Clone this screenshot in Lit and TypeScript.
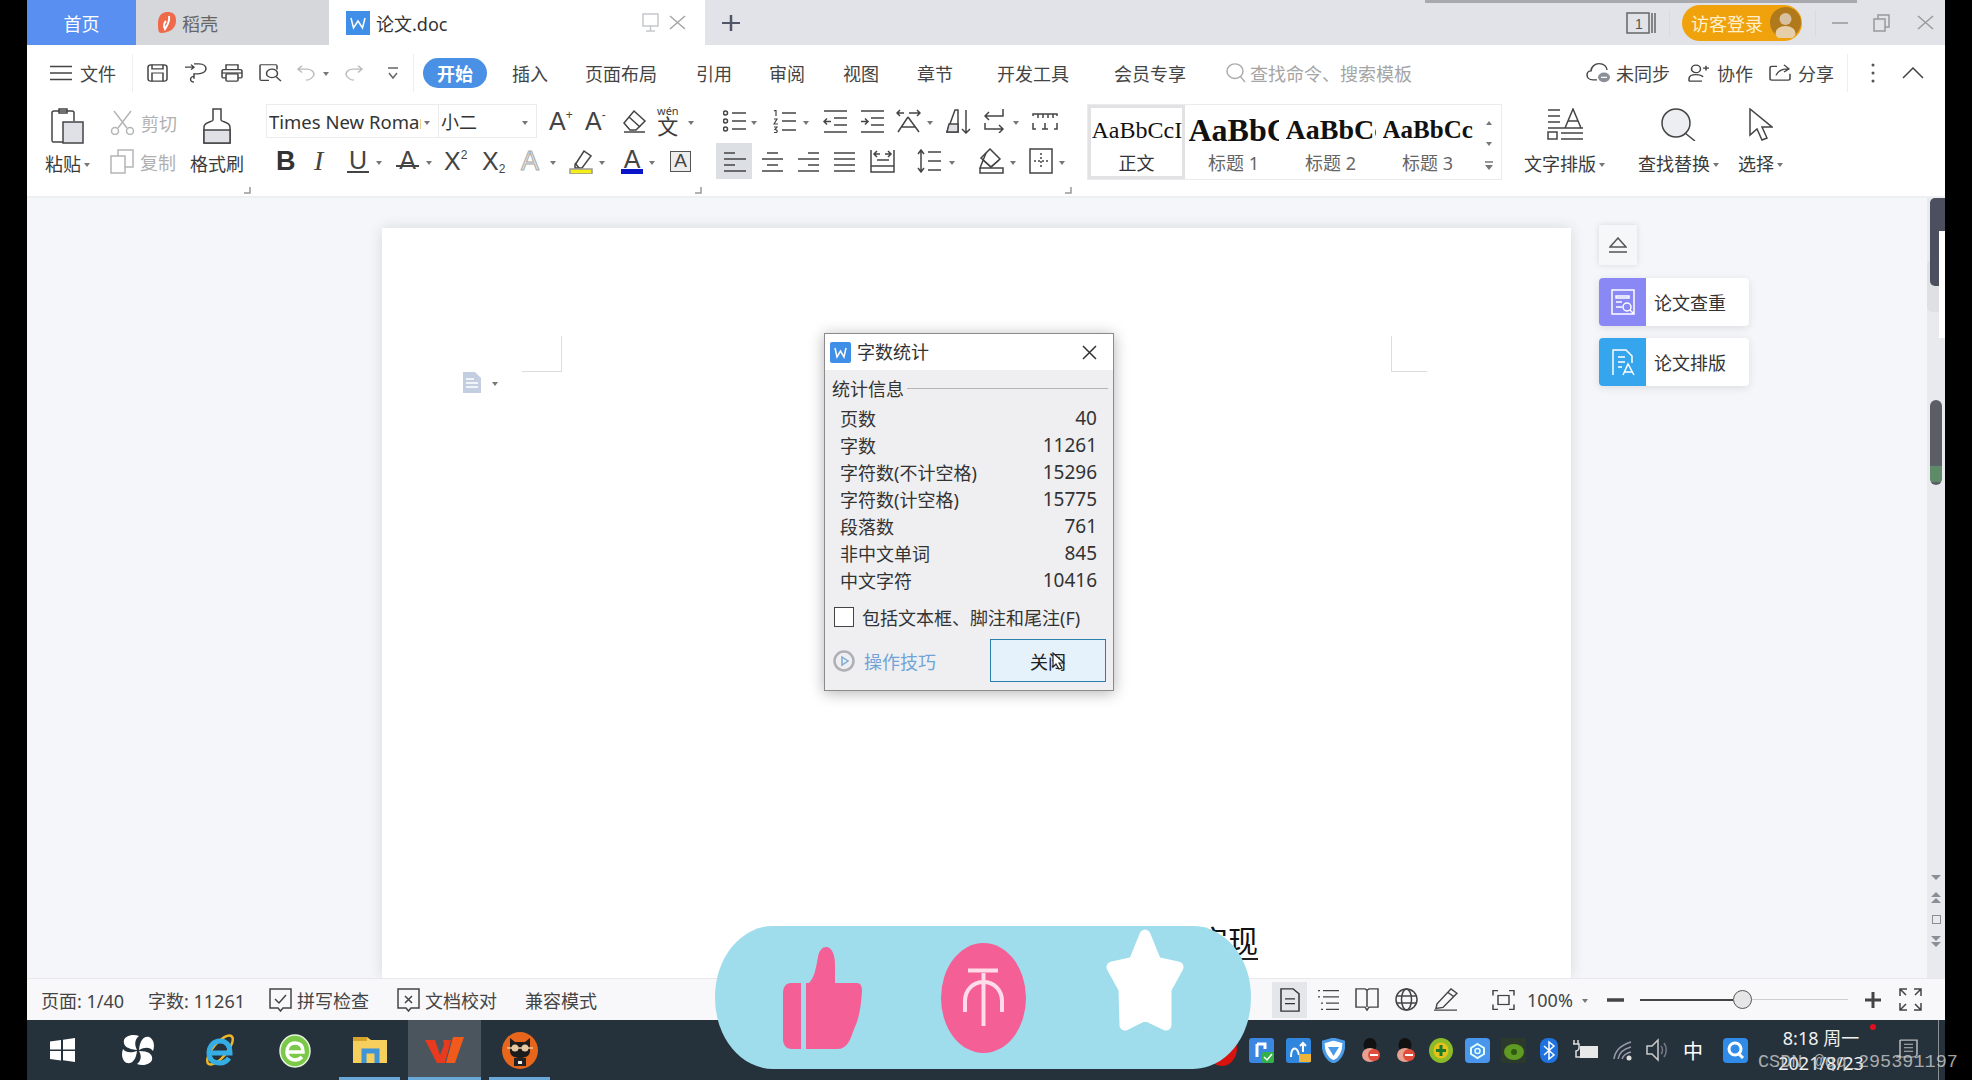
import { LitElement, html, css, svg } from "lit";
import { customElement } from "lit/decorators.js";

// svg wrapper, dh squeezes the drawing to another display height when needed
const ic = (w: number, h: number, body: unknown, color = "#444", dh = h) => html`<svg
  class="ic"
  width=${w}
  height=${dh}
  viewBox="0 0 ${w} ${h}"
  preserveAspectRatio="none"
  fill="none"
  stroke=${color}
  stroke-width="1.5"
>
  ${body}
</svg>`;

const caret = html`<i class="caret"></i>`;
const launcher = ic(7, 7, svg`<path d="M6 0V6H0" stroke="#999" />`);

// places items at given page x positions, each slot runs up to the next item
const spread = (base: number, items: [number, unknown][]) =>
  items.map(([x, tpl], i) => {
    const next = items[i + 1];
    const ml = i === 0 ? x - base : 0;
    const w = next ? `width:${next[0] - x}px;` : "";
    return html`<span class="slot" style="margin-left:${ml}px;${w}">${tpl}</span>`;
  });

const icons = {
  menu: ic(22, 16, svg`<path d="M0 1.5H22M0 8H22M0 14.5H22" />`),
  save: ic(21, 22, svg`<rect x="1" y="1" width="19" height="20" rx="3" /><path d="M5 1V6H16V1M5 21V11H16V21" />`, "#444", 18),
  saveAs: ic(22, 24, svg`<path d="M0 5H9M6 2L9 5L6 8M9 1H14C19 1 21 4 21 7C21 11 17 13 13 13H9V19M9 23A3.5 3.5 0 1 1 9.1 16" />`, "#444", 20),
  print: ic(22, 22, svg`<path d="M5 7V1H17V7M5 17H2C1 17 1 16 1 15V9C1 8 2 7 3 7H19C20 7 21 8 21 9V15C21 16 21 17 20 17H17" /><rect x="5" y="12" width="12" height="9" rx="1" /><path d="M1 11H21" />`, "#444", 18),
  preview: ic(23, 23, svg`<path d="M10 21H2C1 21 1 20 1 19V2C1 1 2 1 2 1H17C18 1 18 2 18 3V7" /><circle cx="13" cy="12" r="5.5" /><path d="M17 16L22 22" />`, "#444", 18),
  undo: ic(18, 20, svg`<path d="M5 2L1 6L5 10M1 6H10C14 6 17 9 17 12C17 15 13 19 9 19" />`, "#bbb", 17),
  redo: ic(18, 20, svg`<path d="M13 2L17 6L13 10M17 6H8C4 6 1 9 1 12C1 15 5 19 9 19" />`, "#bbb", 17),
  custom: ic(12, 14, svg`<path d="M1 2H11M2 7L6 12L10 7" />`, "#666"),
  search: ic(20, 22, svg`<circle cx="9" cy="9" r="8" /><path d="M14.5 15L19 21" />`, "#aaa", 20),
  cloud: ic(25, 26, svg`<path d="M11 22H7C3 22 1 19 1 16C1 13 3 11 5 11C5 6 9 2 13 2C18 2 21 6 21 10" /><circle cx="18" cy="19" r="6" fill="#8b8f98" stroke="none" /><path d="M15 19H21" stroke="#fff" />`, "#444", 21),
  person: ic(21, 22, svg`<circle cx="8" cy="6" r="4.5" /><path d="M1 21V18C1 14 5 13 8 13C11 13 14 14 15 16M1 21H14M15 5H21M18 2V8" />`, "#444", 18),
  share: ic(23, 21, svg`<path d="M8 3H3C2 3 1 4 1 5V18C1 19 2 20 3 20H19C20 20 21 19 21 18V12M7 14C9 8 13 6 19 6M15 1L20 6L15 10" />`, "#444", 17),
  dots: ic(4, 20, svg`<circle cx="2" cy="2" r="1.5" fill="#555" stroke="none" /><circle cx="2" cy="10" r="1.5" fill="#555" stroke="none" /><circle cx="2" cy="18" r="1.5" fill="#555" stroke="none" />`),
  up: ic(22, 12, svg`<path d="M1 11L11 1L21 11" />`),
  paste: ic(33, 36, svg`<path d="M12 34H2C1 34 1 33 1 32V5C1 4 2 3 3 3H21C22 3 23 4 23 5V13" /><rect x="8" y="1" width="8" height="4" /><rect x="12" y="14" width="20" height="21" fill="#dfe1e6" />`),
  cut: ic(25, 25, svg`<path d="M4 1L17 18M21 1L8 18" /><circle cx="5" cy="21" r="3.5" /><circle cx="20" cy="21" r="3.5" />`, "#b5b5b5"),
  copy: ic(24, 25, svg`<rect x="1" y="7" width="14" height="17" /><path d="M8 7V1H23V18H15" />`, "#b5b5b5"),
  brush: ic(28, 36, svg`<path d="M10 1H18V12C18 14 27 14 27 19V35H1V19C1 14 10 14 10 12Z" /><path d="M1 22H27V35H1Z" fill="#dfe1e6" />`),
  erase: ic(25, 24, svg`<path d="M12 2L23 12L14 21H8L2 14Z" /><path d="M7 8L18 18M2 23H23" />`),
  highlight: ic(24, 25, svg`<path d="M6 16L15 2L22 7L13 19H6Z" /><path d="M10 19L6 14" /><rect x="1" y="20" width="22" height="5" fill="#f5ee1b" stroke="#999" />`),
  bullets: ic(23, 22, svg`<circle cx="2.5" cy="3" r="2" /><circle cx="2.5" cy="11" r="2" /><circle cx="2.5" cy="19" r="2" /><path d="M9 3H23M9 11H23M9 19H23" />`),
  numbers: ic(23, 23, svg`<path d="M9 3H23M9 11H23M9 20H23" /><path d="M1 1L3 0V6M1 9H4L1 14H5M1 17H4L2 19.5C4 19.5 5 21 3.5 22.5H1" stroke-width="1.2" />`),
  outdent: ic(24, 23, svg`<path d="M1 1H24M11 8H24M11 15H24M1 22H24M8 11.5H1M4 8.5L1 11.5L4 14.5" />`),
  indent: ic(24, 23, svg`<path d="M1 1H24M11 8H24M11 15H24M1 22H24M1 11.5H8M5 8.5L8 11.5L5 14.5" />`),
  cjk: ic(25, 24, svg`<path d="M1 4H8M4 1L1 4L4 7M13 4H24M21 1L24 4L21 7M12 8L2 23M12 8L23 23M6 18H19" />`),
  sort: ic(25, 25, svg`<path d="M1 23L9 1H12V23H1Z" /><path d="M3 15H12V23H1Z" fill="#dfe1e6" /><path d="M20 1V24M16 20L20 24L24 20" />`),
  wrap: ic(20, 24, svg`<path d="M19 0V7H1M5 3L1 7L5 11M1 14V20H19M15 16L19 20L15 24" />`),
  tabs: ic(26, 20, svg`<path d="M1 5V3H25V5M6 3V7M11 3V7M16 3V7M21 3V7M1 12V18H4M25 12V18H22M13 12V18M10 18H16" />`),
  aLeft: ic(23, 21, svg`<path d="M1 2H12M1 8H23M1 14H12M1 20H23" />`),
  aCenter: ic(23, 21, svg`<path d="M6 2H17M1 8H22M6 14H17M1 20H22" />`),
  aRight: ic(23, 21, svg`<path d="M11 2H22M1 8H22M11 14H22M1 20H22" />`),
  justify: ic(23, 21, svg`<path d="M1 2H22M1 8H22M1 14H22M1 20H22" />`),
  dist: ic(25, 24, svg`<path d="M1 1V23H24V1M1 17H24M7 11H19M4 5H10M7 2L4 5L7 8M15 5H21M18 2L21 5L18 8" />`),
  spacing: ic(24, 24, svg`<path d="M4 1V23M1 5L4 1L7 5M1 19L4 23L7 19M11 3H24M11 12H24M11 21H24" />`),
  fill: ic(25, 26, svg`<path d="M11 1L21 11L12 19L2 10Z" /><path d="M7 5L1 20H24V25H1V20" /><path d="M4 12L12 19L20 12" />`),
  border: ic(24, 26, svg`<rect x="1" y="1" width="22" height="24" /><path d="M12 5V21M5 13H19" stroke-dasharray="2 2" />`),
  layout: ic(36, 32, svg`<path d="M1 2H13M1 8H13M1 14H13M1 20H36M18 20L26 1L34 20M21 13H31M14 31H36M14 25H36" /><rect x="1" y="24" width="9" height="7" />`),
  find: ic(35, 33, svg`<circle cx="15" cy="15" r="14" fill="#eceef2" /><path d="M24 25L34 33" />`),
  select: ic(24, 33, svg`<path d="M1 1V27L8 21L13 32L18 30L13 19H23Z" />`),
  monitor: ic(17, 19, svg`<rect x="1" y="1" width="15" height="12" /><path d="M8.5 13V18M4 18H13" />`, "#c5c8cc"),
  x: ic(18, 18, svg`<path d="M1 1L17 17M17 1L1 17" />`, "#9a9a9a"),
  plus: ic(18, 18, svg`<path d="M9 0V18M0 9H18" stroke-width="2.5" />`, "#505668", 16),
  book: ic(31, 23, svg`<rect x="1" y="2" width="22" height="20" /><path d="M26 2V22M29 2V22" /><text x="9" y="18" font-size="14" fill="#555" stroke="none" font-family="Liberation Sans">1</text>`, "#666"),
  min: ic(16, 2, svg`<path d="M0 1H16" />`, "#999"),
  restore: ic(17, 18, svg`<rect x="1" y="5" width="11" height="12" /><path d="M5 5V1H16V13H12" />`, "#999"),
  wps: ic(24, 24, svg`<rect width="24" height="24" fill="#3f8ee8" stroke="none" /><path d="M5 7L7.5 17L12 10L16.5 17L19 7" stroke="#fff" />`),
  shell: ic(18, 21, svg`<path d="M9 0C15 0 18 2 18 9C18 16 12 21 3 21C0 21 0 17 0 11C0 5 3 0 9 0Z" fill="#ee6a4a" stroke="none" /><path d="M11 4C12 9 9 14 7 17C5 13 7 10 8 9" stroke="#fff" stroke-width="2" />`),
  docCheck: ic(23, 24, svg`<path d="M1 1H22V20H14L11.5 23L9 20H1Z" /><path d="M6 11L10 15L17 7" />`),
  docX: ic(23, 24, svg`<path d="M1 1H22V20H14L11.5 23L9 20H1Z" /><path d="M8 8L15 15M15 8L8 15" />`),
  vDoc: ic(20, 29, svg`<path d="M1 1H13L19 7V28H1Z" /><path d="M5 13H15M5 19H15" />`, "#333", 24),
  vOutline: ic(22, 28, svg`<path d="M6 2H22M1 2H3M6 10H22M1 10H3M9 18H22M4 18H6M9 26H22M4 26H6" />`, "#444", 22),
  vBook: ic(24, 29, svg`<path d="M1 1H10L12 3L14 1H23V24H14L12 28L10 24H1ZM12 3V24" />`, "#444", 23),
  vWeb: ic(23, 23, svg`<circle cx="11.5" cy="11.5" r="10.5" /><ellipse cx="11.5" cy="11.5" rx="5" ry="10.5" /><path d="M1 8H22M1 15H22" />`),
  vPen: ic(24, 26, svg`<path d="M3 18L17 1L23 6L9 22L2 23ZM14 5L20 10M0 25H23" />`, "#444", 23),
  focus: ic(23, 27, svg`<path d="M1 8V2H6M17 2H22V8M1 19V25H6M17 25H22V19" /><rect x="6" y="8" width="11" height="11" />`, "#444", 22),
  full: ic(23, 23, svg`<path d="M1 8V1H8M1 1L7 7M15 1H22V8M22 1L16 7M1 15V22H8M1 22L7 16M15 22H22V15M22 22L16 16" />`),
  eject: ic(18, 16, svg`<path d="M1 10L9 1L17 10Z" /><path d="M0 15H18" />`, "#555"),
  check: ic(24, 26, svg`<rect x="1" y="1" width="22" height="24" /><path d="M5 7H18V9H5ZM5 13H11M5 18H11" /><circle cx="16" cy="18" r="4" /><path d="M19 21L23 25" />`, "#fff"),
  typeset: ic(24, 27, svg`<path d="M2 26V1H15L21 7V14M7 8H14M7 13H14M7 18H11M12 26L17 15L23 26M14 23H21" />`, "#fff"),
  play: ic(22, 22, svg`<circle cx="11" cy="11" r="9.5" stroke-width="2.5" /><path d="M9 7L15 11L9 15Z" stroke="#7ea9d6" />`, "#aeb0b5"),
};

const qq = ic(22, 24, svg`<ellipse cx="10" cy="7" rx="6.5" ry="7" fill="#111" stroke="none" /><ellipse cx="10" cy="17" rx="8" ry="7" fill="#e8a090" stroke="none" /><circle cx="14" cy="17" r="6" fill="#e04b3a" stroke="none" /><path d="M10 17H18" stroke="#fff" stroke-width="2" />`);

const tray = [
  [1249, ic(25, 25, svg`<rect width="25" height="25" rx="3" fill="#3a86e0" stroke="none" /><path d="M8 6V19M8 6H16V11" stroke="#fff" stroke-width="3" /><rect x="13" y="14" width="12" height="11" rx="2" fill="#33b24a" stroke="none" /><path d="M15 19L18 22L23 16" stroke="#fff" />`)],
  [1286, ic(25, 25, svg`<rect width="25" height="25" rx="3" fill="#2f86dc" stroke="none" /><path d="M5 19C5 9 11 7 13 17M17 14V5M14 8L17 5L20 8" stroke="#fff" stroke-width="2" /><rect x="13" y="16" width="12" height="8" fill="#efb53a" stroke="none" />`)],
  [1322, ic(23, 25, svg`<path d="M11.5 1L22 4C22 14 19 21 11.5 24C4 21 1 14 1 4Z" fill="#fff" stroke="#4a9ae8" stroke-width="3" /><path d="M6 9H17L11.5 18Z" fill="#4a9ae8" stroke="none" />`)],
  [1360, qq],
  [1395, qq],
  [1429, ic(24, 25, svg`<ellipse cx="12" cy="12.5" rx="12" ry="12.5" fill="#8cbb2a" stroke="none" /><ellipse cx="12" cy="12.5" rx="7.5" ry="8" fill="#e8c21a" stroke="none" /><path d="M12 7V18M7 12.5H17" stroke="#197a2c" stroke-width="3" />`)],
  [1465, ic(25, 25, svg`<rect width="25" height="25" rx="4" fill="#4a96ec" stroke="none" /><path d="M12.5 6L19 10V16L12.5 20L6 16V10Z" stroke="#dff" stroke-width="2" /><circle cx="12.5" cy="13" r="2.5" stroke="#dff" />`)],
  [1501, ic(25, 25, svg`<rect width="25" height="25" fill="#2b3a2a" stroke="none" /><ellipse cx="13" cy="14" rx="10" ry="8" fill="#5f9a22" stroke="none" /><circle cx="13" cy="14" r="3" fill="#2f5a12" stroke="none" />`)],
  [1540, ic(18, 25, svg`<rect width="18" height="25" rx="8" fill="#1e73e0" stroke="none" /><path d="M4 8L14 17L9 21V4L14 8L4 17" stroke="#fff" />`)],
  [1572, ic(26, 20, svg`<rect x="8" y="6" width="18" height="12" fill="#e8e8e8" stroke="none" /><path d="M2 0V4M6 0V4M1 4H7V8C7 10 5 11 4 11V17H8" stroke="#ddd" />`)],
  [1613, ic(20, 22, svg`<path d="M1 20C2 12 8 6 18 3M5 20C6 14 10 10 18 8M9 20C10 17 13 14 18 13" stroke="#99a" /><circle cx="16" cy="19" r="2.5" fill="#ddd" stroke="none" />`)],
  [1646, ic(21, 24, svg`<path d="M1 8H6L12 2V22L6 16H1Z" stroke="#ccc" /><path d="M15 8C17 10 17 14 15 16M18 5C21 9 21 15 18 19" stroke="#778" />`)],
  [1683, html`<span class="tray-cn">中</span>`],
  [1723, ic(25, 25, svg`<rect width="25" height="25" rx="4" fill="#2f8ae8" stroke="none" /><circle cx="12" cy="11" r="6" stroke="#fff" stroke-width="3" /><path d="M15 15L20 20" stroke="#fff" stroke-width="3" />`)],
  [1775, html`<span class="clock"><span>8:18 周一</span><span>2021/8/23</span></span>`],
  [1895, html`<span class="notify">${ic(23, 30, svg`<path d="M5 3V27H1M5 3H22V23C22 26 20 27 18 27H1C3 27 5 26 5 23M9 9H18M9 14H18M9 19H18" />`, "#bbb", 21)}</span>`],
  [1938, html`<span class="tb-line"></span>`],
] as [number, unknown][];

const apps = [
  [50, ic(25, 24, svg`<path d="M0 3.5L11 2V11.5H0ZM13 1.7L25 0V11.5H13ZM0 13H11V22.5L0 21ZM13 13H25V24L13 22.3Z" fill="#fff" stroke="none" />`)],
  [121, ic(34, 30, svg`<path d="M16 15C5 14 2 10 3 5C5 0 13 -1 18 1C14 4 13 9 16 15ZM18 15C19 5 23 1 28 2C33 4 34 11 32 16C29 12 24 12 18 15ZM18 16C29 16 32 20 31 25C29 30 21 31 16 29C20 26 21 21 18 16ZM16 16C15 25 11 29 6 28C1 26 0 19 2 14C5 18 10 18 16 16Z" fill="#fff" stroke="none" />`)],
  [202, ic(36, 36, svg`<ellipse cx="18" cy="18" rx="18" ry="7" transform="rotate(-50 18 18)" stroke="#efb626" stroke-width="2.5" /><path d="M8 21H28C28 12 23 9 18 9C11 9 7 15 7 21C7 28 12 31 18 31C22 31 25 29 27 26" stroke="#35aee6" stroke-width="5" />`)],
  [279, ic(32, 36, svg`<ellipse cx="16" cy="19" rx="15" ry="16" fill="#7cc94a" stroke="#e8f5e0" stroke-width="1.5" /><path d="M8 20H24C24 13 20 11 16 11C11 11 8 15 8 20C8 25 12 28 16 28C19 28 21 27 23 25" stroke="#fff" stroke-width="3.5" />`)],
  [353, ic(34, 28, svg`<path d="M0 1H14L18 4H34V27H0Z" fill="#f6cf5c" stroke="none" /><rect x="0" y="1" width="14" height="4" fill="#d9a22b" stroke="none" /><path d="M11 27V15H24V27" stroke="#3d94d8" stroke-width="5" />`)],
  [425, ic(39, 26, svg`<path d="M0 3H10L15 18L19 8L18 3H26L20 26H12Z" fill="#e83a1e" stroke="none" /><path d="M28 0H39L30 26H21Z" fill="#f25a1c" stroke="none" />`)],
  [502, ic(36, 37, svg`<ellipse cx="18" cy="18.5" rx="18" ry="18.5" fill="#e8651c" stroke="none" /><path d="M8 6L13 10H23L28 6V19C28 24 23 26 18 26C13 26 8 24 8 19Z" fill="#1c1c1c" stroke="none" /><circle cx="13" cy="16" r="3.5" fill="#e8c8a0" stroke="none" /><circle cx="23" cy="16" r="3.5" fill="#e8c8a0" stroke="none" /><path d="M5 16H31" stroke="#e8c8a0" /><rect x="12" y="26" width="12" height="8" fill="#222" stroke="none" /><rect x="16" y="29" width="4" height="3" fill="#eee" stroke="none" />`)],
] as [number, unknown][];

@customElement("app-root")
export class AppRoot extends LitElement {
  static styles = css`
    :host {
      display: block;
      width: 1972px;
      height: 1080px;
      background: #000;
      overflow: hidden;
      font-family: "Noto Sans", "Noto Sans CJK SC", sans-serif;
      font-size: 18px;
      color: #3a3a3a;
    }
    * {
      box-sizing: border-box;
    }
    .screen {
      position: relative;
      display: flex;
      flex-direction: column;
      width: 1918px;
      height: 1080px;
      margin-left: 27px;
      background: #fff;
    }
    .slot {
      position: relative;
      display: inline-flex;
      flex: none;
      align-items: center;
      white-space: nowrap;
    }
    .ic {
      flex: none;
      display: block;
    }
    .caret {
      flex: none;
      width: 0;
      height: 0;
      margin-top: 3px;
      border: 3.5px solid transparent;
      border-top: 4px solid #777;
      border-bottom: 0;
    }

    /* title bar */
    .titlebar {
      position: relative;
      display: flex;
      flex: none;
      height: 45px;
      background: #e1e3e8;
      align-items: stretch;
    }
    .tab {
      display: flex;
      flex: none;
      align-items: center;
    }
    .tab-home {
      width: 109px;
      justify-content: center;
      background: #5a8ff2;
      color: #fff;
    }
    .tab-shell {
      width: 193px;
      gap: 6px;
      padding-left: 22px;
      background: #d5d7da;
      color: #666;
    }
    .tab-doc {
      width: 376px;
      padding-left: 17px;
      background: #fff;
      color: #333;
    }
    .tab-name {
      width: 266px;
      margin-left: 6px;
    }
    .tab-close {
      margin-left: 10px;
    }
    .title-right {
      display: flex;
      align-items: center;
    }
    .login {
      display: flex;
      width: 120px;
      height: 36px;
      align-items: center;
      justify-content: space-between;
      padding: 0 1px 0 9px;
      border-radius: 18px;
      background: #f0a20c;
      color: #fff0cc;
      font-size: 18px;
    }
    .avatar {
      width: 31px;
      height: 31px;
      border-radius: 50%;
      background: #b07a1c;
    }
    .vline {
      width: 1px;
      height: 26px;
      background: #d8dade;
    }
    .top-shadow {
      position: absolute;
      left: 1398px;
      top: 0;
      width: 432px;
      height: 3px;
      background: #a8a9ad;
    }

    /* menu row */
    .menu {
      display: flex;
      flex: none;
      height: 55px;
      align-items: center;
      color: #444;
    }
    .active {
      display: flex;
      width: 64px;
      height: 30px;
      align-items: center;
      justify-content: center;
      border-radius: 15px;
      background: #4a90e4;
      color: #fff;
      font-weight: 700;
    }
    .grey {
      color: #a5a5a5;
    }
    .menu .vline {
      height: 38px;
      background: #eeeeee;
    }

    /* ribbon */
    .ribbon {
      display: flex;
      flex: none;
      height: 98px;
      border-bottom: 2px solid #eeeff2;
    }
    .group {
      display: flex;
      flex: none;
      flex-direction: column;
    }
    .g-clip {
      width: 235px;
    }
    .g-font {
      width: 448px;
    }
    .g-para {
      width: 370px;
    }
    .g-tools {
      display: flex;
      flex: none;
      align-items: flex-start;
    }
    .g-main {
      display: flex;
      height: 87px;
      align-items: flex-start;
    }
    .foot {
      display: flex;
      justify-content: flex-end;
      padding-right: 11px;
    }
    .g-font .foot,
    .g-para .foot {
      padding-right: 8px;
    }
    .big {
      display: flex;
      flex-direction: column;
      align-items: center;
      padding-top: 8px;
    }
    .big .ic-box {
      display: flex;
      height: 36px;
      align-items: flex-start;
    }
    .label {
      display: flex;
      height: 24px;
      margin-top: 7px;
      align-items: center;
      gap: 3px;
      white-space: nowrap;
    }
    .small-col {
      display: flex;
      flex-direction: column;
      gap: 14px;
      padding-top: 10px;
    }
    .small-col .slot {
      gap: 6px;
      color: #b0b0b0;
      height: 25px;
    }
    .rows {
      display: flex;
      flex-direction: column;
      padding-top: 4px;
    }
    .row1 {
      display: flex;
      height: 34px;
      align-items: center;
    }
    .row2 {
      display: flex;
      height: 36px;
      margin-top: 5px;
      align-items: center;
    }
    .fontbox {
      display: flex;
      height: 34px;
      align-items: center;
      border: 1px solid #ececec;
      padding-left: 2px;
      color: #333;
      font-size: 18px;
    }
    .fontbox.name {
      width: 172px;
      gap: 3px;
      border-right: 0;
    }
    .fontbox.name span {
      width: 152px;
      overflow: hidden;
      font-family: "Noto Sans", sans-serif;
      font-size: 18.5px;
      white-space: nowrap;
    }
    .fontbox.size {
      width: 99px;
      justify-content: space-between;
      padding-right: 8px;
    }
    .glyph {
      line-height: 1;
      font-family: "Liberation Sans", sans-serif;
      font-size: 25px;
      color: #444;
    }
    .glyph sup {
      font-size: 12px;
      vertical-align: 11px;
      line-height: 0;
    }
    .glyph sub {
      font-size: 12px;
      vertical-align: -3px;
      line-height: 0;
    }
    .bold {
      font-weight: 700;
      font-size: 27px;
      color: #333;
    }
    .ital {
      font-family: "Liberation Serif", serif;
      font-style: italic;
      font-size: 28px;
    }
    .under {
      display: inline-block;
      border-bottom: 2px solid #444;
      padding: 0 2px;
      line-height: 22px;
    }
    .strike {
      position: relative;
      display: inline-block;
      width: 23px;
      height: 24px;
      text-align: center;
      overflow: hidden;
      line-height: 22px;
    }
    .strike::after {
      content: "";
      position: absolute;
      left: 0;
      right: 0;
      top: 16px;
      height: 2px;
      background: #444;
    }
    .outline {
      color: #e8e8e8;
      -webkit-text-stroke: 1px #aaa;
      font-size: 27px;
    }
    .colored {
      display: inline-block;
      width: 22px;
      border-bottom: 5px solid #0a14c8;
      line-height: 20px;
      text-align: center;
    }
    .boxed {
      display: block;
      width: 21px;
      height: 21px;
      border: 1.5px solid #555;
      background: #ededed;
      font-size: 19px;
      line-height: 18px;
      text-align: center;
    }
    .wen {
      display: flex;
      flex-direction: column;
      align-items: center;
      line-height: 1;
      font-size: 21px;
    }
    .wen b {
      font-weight: 400;
      font-size: 11px;
      line-height: 10px;
    }
    .on {
      display: flex;
      width: 36px;
      height: 36px;
      margin-left: -7px;
      align-items: center;
      justify-content: center;
      background: #dcdfe4;
    }
    .gallery {
      display: flex;
      flex: none;
      width: 415px;
      height: 76px;
      margin: 4px 0 0 7px;
      border: 1px solid #ebebeb;
    }
    .style {
      display: flex;
      flex: none;
      flex-direction: column;
      width: 97px;
      align-items: center;
      overflow: hidden;
      color: #666;
      padding-top: 6px;
    }
    .style.sel {
      border: 3px solid #e2e2e4;
      padding-top: 3px;
      color: #333;
    }
    .sample {
      display: block;
      width: 90px;
      height: 38px;
      overflow: hidden;
      white-space: nowrap;
      font-family: "Liberation Serif", serif;
      line-height: 38px;
      color: #111;
    }
    .s0 {
      font-size: 24px;
    }
    .s1 {
      font-size: 32px;
      font-weight: 700;
    }
    .s2 {
      font-size: 28px;
      font-weight: 700;
    }
    .s3 {
      font-size: 25px;
      font-weight: 700;
    }
    .spin {
      display: flex;
      flex: 1;
      flex-direction: column;
      align-items: center;
      justify-content: space-around;
      padding: 6px 0 2px;
    }

    /* document area */
    .doc {
      display: flex;
      flex: 1;
      min-height: 0;
      padding-left: 355px;
      background: #f5f6fa;
    }
    .page {
      flex: none;
      width: 1189px;
      margin-top: 30px;
      background: #fff;
      box-shadow: 0 0 14px rgba(0, 0, 0, 0.12);
    }
    .marks {
      display: flex;
      justify-content: space-between;
      margin-top: 108px;
      padding: 0 144px 0 140px;
    }
    .mark {
      width: 40px;
      height: 36px;
      border-right: 1px solid #dcdcdc;
      border-bottom: 1px solid #dcdcdc;
    }
    .mark.r {
      width: 36px;
      border-right: 0;
      border-left: 1px solid #dcdcdc;
    }
    .para-ico {
      display: flex;
      margin-left: 81px;
      align-items: center;
      gap: 11px;
    }
    .doc-title {
      margin: 531px 313px 0 auto;
      width: 60px;
      border-bottom: 2px solid #222;
      color: #111;
      font-size: 30px;
      line-height: 34px;
      white-space: nowrap;
    }
    .aside {
      display: flex;
      flex: none;
      flex-direction: column;
      margin: 27px 0 0 28px;
    }
    .eject {
      display: flex;
      width: 38px;
      height: 40px;
      align-items: center;
      justify-content: center;
      background: #f6f7f9;
      box-shadow: 0 0 6px rgba(0, 0, 0, 0.12);
    }
    .card {
      display: flex;
      width: 150px;
      height: 48px;
      margin-top: 13px;
      align-items: center;
      gap: 8px;
      overflow: hidden;
      border-radius: 4px;
      background: #fff;
      box-shadow: 0 2px 8px rgba(0, 0, 0, 0.1);
      color: #333;
    }
    .card + .card {
      margin-top: 12px;
    }
    .card-ic {
      display: flex;
      width: 47px;
      height: 48px;
      align-items: center;
      justify-content: center;
    }
    .purple {
      background: #8a88f5;
    }
    .blue {
      background: #35a5ee;
    }
    .scroll {
      position: relative;
      display: flex;
      flex: none;
      flex-direction: column;
      width: 18px;
      margin-left: auto;
      align-items: center;
      background: #e9eaee;
      padding-top: 202px;
    }
    .thumb {
      width: 12px;
      height: 85px;
      border-radius: 6px;
      background: linear-gradient(#5c5e67 0 78%, #5e8a68 78% 96%, #5c5e67 96%);
    }
    .arrows {
      display: flex;
      flex-direction: column;
      align-items: center;
      gap: 12px;
      margin-top: 390px;
    }
    .square {
      width: 9px;
      height: 9px;
      border: 1.5px solid #8c8d97;
    }
    .tri-d,
    .tri-u {
      display: block;
      width: 0;
      height: 0;
      border: 5px solid transparent;
      border-bottom: 0;
      border-top: 5px solid #8c8d97;
    }
    .tri-u {
      border-top: 0;
      border-bottom: 5px solid #8c8d97;
    }
    .pair {
      display: flex;
      flex-direction: column;
      gap: 1px;
    }
    .scroll-top {
      position: absolute;
      left: 3px;
      top: 0;
      width: 15px;
      height: 88px;
      border-radius: 5px 0 0 5px;
      background: #4c4f5d;
    }
    .scroll-white {
      position: absolute;
      left: 12px;
      top: 33px;
      width: 6px;
      height: 107px;
      background: #fff;
    }
    .scroll-pale {
      position: absolute;
      left: 0;
      top: 62px;
      width: 12px;
      height: 52px;
      border-radius: 5px 0 0 5px;
      background: #dfe0e4;
    }

    /* status bar */
    .status {
      display: flex;
      flex: none;
      height: 42px;
      align-items: center;
      border-top: 1px solid #e8e8ea;
      background: #f8f8fa;
      color: #444;
    }
    .status .on2 {
      display: flex;
      width: 35px;
      height: 36px;
      align-items: center;
      justify-content: center;
      background: #e5e6e9;
    }
    .slider {
      display: flex;
      align-items: center;
      width: 208px;
      height: 20px;
    }
    .slider b {
      flex: none;
      width: 93px;
      height: 2px;
      background: #444;
    }
    .slider u {
      flex: none;
      width: 19px;
      height: 19px;
      border: 1.5px solid #555;
      border-radius: 50%;
      background: #e6e6e6;
    }
    .slider s {
      flex: 1;
      height: 1px;
      background: #cfcfcf;
    }

    /* taskbar */
    .taskbar {
      position: relative;
      display: flex;
      flex: none;
      height: 60px;
      align-items: center;
      background: #26323b;
      color: #eee;
    }
    .current {
      position: absolute;
      left: 381px;
      top: 0;
      width: 73px;
      height: 60px;
      background: #4a555e;
    }
    .running {
      position: absolute;
      top: 57px;
      height: 3px;
      background: #6aa8d8;
    }
    .tray-cn {
      font-size: 20px;
      color: #fff;
    }
    .notify {
      display: block;
      margin-bottom: 4px;
    }
    .clock {
      display: flex;
      width: 92px;
      flex-direction: column;
      align-items: center;
      gap: 1px;
      line-height: 24px;
      color: #f0f0f0;
    }
    .tb-line {
      display: block;
      width: 1px;
      height: 60px;
      background: #8a8f94;
    }
    .red-dot {
      position: absolute;
      left: 1843px;
      top: 4px;
      width: 6px;
      height: 6px;
      border-radius: 50%;
      background: #e01020;
    }
    .red-peek {
      position: absolute;
      left: 1180px;
      top: 10px;
      width: 30px;
      height: 36px;
      border-radius: 50%;
      background: #d8120e;
    }
    .mark-text {
      position: absolute;
      left: 1731px;
      top: 32px;
      color: rgba(205, 205, 205, 0.8);
      font-family: "Liberation Mono", monospace;
      font-size: 18.5px;
      white-space: nowrap;
    }

    /* dialog */
    .dialog {
      position: absolute;
      left: 797px;
      top: 333px;
      width: 290px;
      height: 358px;
      border: 1px solid #8b8b8b;
      background: #efeff1;
      box-shadow: 0 2px 14px rgba(0, 0, 0, 0.3);
    }
    .dlg-title {
      display: flex;
      height: 36px;
      align-items: center;
      gap: 6px;
      padding: 0 16px 0 5px;
      background: #fff;
      color: #333;
    }
    .dlg-title span {
      margin-top: -3px;
    }
    .dlg-title .ic:last-child {
      margin-left: auto;
    }
    .legend {
      display: flex;
      height: 24px;
      margin: 6px 5px 0 7px;
      align-items: center;
      gap: 3px;
      color: #333;
    }
    .legend::after {
      content: "";
      flex: 1;
      height: 1px;
      background: #b5b5b5;
    }
    .stats {
      display: grid;
      grid-template-columns: 1fr auto;
      grid-auto-rows: 27px;
      align-items: center;
      margin-top: 4px;
      padding: 0 16px 0 15px;
      color: #333;
    }
    .stats span:nth-child(2n) {
      justify-self: end;
      font-size: 19px;
    }
    .incl {
      display: flex;
      height: 20px;
      margin: 14px 0 0 9px;
      align-items: center;
      gap: 8px;
      color: #333;
    }
    .box {
      width: 20px;
      height: 20px;
      border: 1.5px solid #444;
      background: #fff;
    }
    .dlg-foot {
      display: flex;
      margin-top: 12px;
      padding: 0 7px 0 8px;
      align-items: center;
    }
    .link {
      display: flex;
      align-items: center;
      gap: 9px;
      color: #6fa3d8;
    }
    .close {
      position: relative;
      display: flex;
      width: 116px;
      height: 43px;
      margin-left: auto;
      align-items: center;
      justify-content: center;
      border: 1px solid #2d7fb0;
      background: #e5f1fb;
      color: #222;
      font-size: 18px;
    }
    .pointer {
      position: absolute;
      left: 61px;
      top: 12px;
    }

    /* floating pill */
    .pill {
      position: absolute;
      left: 688px;
      top: 926px;
      display: flex;
      width: 536px;
      height: 143px;
      align-items: center;
      border-radius: 58px / 71px;
      background: #9fdcec;
    }
    .star {
      margin-bottom: 35px;
    }
  `;

  render() {
    return html`
      <div class="screen">
        ${this.titlebar()} ${this.menu()} ${this.ribbon()} ${this.doc()} ${this.status()} ${this.taskbar()}
        ${this.dialog()} ${this.pill()}
      </div>
    `;
  }

  private titlebar() {
    return html`
      <div class="titlebar">
        <div class="tab tab-home">首页</div>
        <div class="tab tab-shell">${icons.shell}<span>稻壳</span></div>
        <div class="tab tab-doc">
          ${icons.wps}<span class="tab-name">论文.doc</span>${icons.monitor}
          <span class="tab-close">${ic(17, 15, svg`<path d="M1 1L16 14M16 1L1 14" />`, "#a5a5a5")}</span>
        </div>
        <div class="title-right">
          ${spread(705, [
            [722, icons.plus],
            [1626, icons.book],
            [1669, html`<span class="vline"></span>`],
            [
              1682,
              html`<span class="login"
                >访客登录<span class="avatar">${ic(31, 31, svg`<circle cx="15.5" cy="12" r="6" fill="#d8c0a0" stroke="none" /><ellipse cx="15.5" cy="26" rx="10" ry="7" fill="#e6cfa8" stroke="none" />`)}</span></span
              >`,
            ],
            [1815, html`<span class="vline"></span>`],
            [1832, icons.min],
            [1873, icons.restore],
            [1917, ic(17, 15, svg`<path d="M1 1L16 14M16 1L1 14" />`, "#999")],
          ])}
        </div>
        <div class="top-shadow"></div>
      </div>
    `;
  }

  private menu() {
    const tab = (s: string) => html`<span>${s}</span>`;
    return html`
      <div class="menu">
        ${spread(27, [
          [50, icons.menu],
          [80, tab("文件")],
          [132, html`<span class="vline"></span>`],
          [147, icons.save],
          [185, icons.saveAs],
          [221, icons.print],
          [259, icons.preview],
          [297, html`${icons.undo}`],
          [323, caret],
          [345, icons.redo],
          [387, icons.custom],
          [413, html`<span class="vline"></span>`],
          [423, html`<span class="active">开始</span>`],
          [512, tab("插入")],
          [585, tab("页面布局")],
          [696, tab("引用")],
          [769, tab("审阅")],
          [843, tab("视图")],
          [917, tab("章节")],
          [997, tab("开发工具")],
          [1114, tab("会员专享")],
          [1226, icons.search],
          [1250, html`<span class="grey">查找命令、搜索模板</span>`],
          [1586, icons.cloud],
          [1616, tab("未同步")],
          [1688, icons.person],
          [1717, tab("协作")],
          [1769, icons.share],
          [1798, tab("分享")],
          [1847, html`<span class="vline"></span>`],
          [1871, icons.dots],
          [1902, icons.up],
        ])}
      </div>
    `;
  }

  private big(icon: unknown, label: string, withCaret = false) {
    return html`<span class="big">
      <span class="ic-box">${icon}</span>
      <span class="label">${label}${withCaret ? caret : ""}</span>
    </span>`;
  }

  private ribbon() {
    return html`
      <div class="ribbon">
        <div class="group g-clip">
          <div class="g-main">
            ${spread(27, [
              [45, this.big(icons.paste, "粘贴", true)],
              [110, html`<span class="small-col">
                <span class="slot">${icons.cut}剪切</span>
                <span class="slot">${icons.copy}复制</span>
              </span>`],
              [190, this.big(icons.brush, "格式刷")],
            ])}
          </div>
          <div class="foot">${launcher}</div>
        </div>

        <div class="group g-font">
          <div class="g-main rows">
            <div class="row1">
              ${spread(262, [
                [266, html`<span class="fontbox name"><span>Times New Roman</span>${caret}</span>`],
                [438, html`<span class="fontbox size">小二${caret}</span>`],
                [549, html`<span class="glyph">A<sup>+</sup></span>`],
                [585, html`<span class="glyph">A<sup>-</sup></span>`],
                [622, icons.erase],
                [657, html`<span class="wen"><b>wén</b>文</span>`],
                [688, caret],
              ])}
            </div>
            <div class="row2">
              ${spread(262, [
                [276, html`<span class="glyph bold">B</span>`],
                [314, html`<span class="glyph ital">I</span>`],
                [347, html`<span class="glyph under">U</span>`],
                [376, caret],
                [396, html`<span class="glyph strike">A</span>`],
                [426, caret],
                [444, html`<span class="glyph">X<sup>2</sup></span>`],
                [482, html`<span class="glyph">X<sub>2</sub></span>`],
                [521, html`<span class="glyph outline">A</span>`],
                [550, caret],
                [569, icons.highlight],
                [599, caret],
                [621, html`<span class="glyph colored">A</span>`],
                [649, caret],
                [670, html`<span class="glyph boxed">A</span>`],
              ])}
            </div>
          </div>
          <div class="foot">${launcher}</div>
        </div>

        <div class="group g-para">
          <div class="g-main rows">
            <div class="row1">
              ${spread(710, [
                [723, icons.bullets],
                [751, caret],
                [773, icons.numbers],
                [803, caret],
                [823, icons.outdent],
                [860, icons.indent],
                [896, icons.cjk],
                [927, caret],
                [946, icons.sort],
                [984, icons.wrap],
                [1013, caret],
                [1032, icons.tabs],
              ])}
            </div>
            <div class="row2">
              ${spread(710, [
                [723, html`<span class="on">${icons.aLeft}</span>`],
                [761, icons.aCenter],
                [797, icons.aRight],
                [833, icons.justify],
                [870, icons.dist],
                [917, icons.spacing],
                [949, caret],
                [979, icons.fill],
                [1010, caret],
                [1029, icons.border],
                [1059, caret],
              ])}
            </div>
          </div>
          <div class="foot">${launcher}</div>
        </div>

        <div class="gallery">
          <div class="style sel"><span class="sample s0">AaBbCcI</span>正文</div>
          <div class="style"><span class="sample s1">AaBbCc</span>标题 1</div>
          <div class="style"><span class="sample s2">AaBbCc</span>标题 2</div>
          <div class="style"><span class="sample s3">AaBbCcI</span>标题 3</div>
          <div class="spin">
            <i class="caret" style="transform:rotate(180deg)"></i>
            ${caret}
            ${ic(8, 9, svg`<path d="M0 1H8" stroke="#777" /><path d="M0 4H8L4 9Z" fill="#777" stroke="none" />`)}
          </div>
        </div>

        <div class="g-tools">
          ${spread(1502, [
            [1524, this.big(icons.layout, "文字排版", true)],
            [1638, this.big(icons.find, "查找替换", true)],
            [1738, this.big(icons.select, "选择", true)],
          ])}
        </div>
      </div>
    `;
  }

  private doc() {
    return html`
      <div class="doc">
        <div class="page">
          <div class="marks"><div class="mark"></div><div class="mark r"></div></div>
          <div class="para-ico">
            ${ic(18, 21, svg`<path d="M0 0H12L18 6V21H0Z" fill="#c3cfe0" stroke="none" /><path d="M3 7H11M3 11H15M3 15H15" stroke="#fff" />`)}
            ${caret}
          </div>
          <div class="doc-title">实现</div>
        </div>
        <div class="aside">
          <div class="eject">${icons.eject}</div>
          <div class="card">
            <span class="card-ic purple">${icons.check}</span>论文查重
          </div>
          <div class="card">
            <span class="card-ic blue">${icons.typeset}</span>论文排版
          </div>
        </div>
        <div class="scroll">
          <div class="scroll-pale"></div>
          <div class="scroll-top"></div>
          <div class="scroll-white"></div>
          <div class="thumb"></div>
          <div class="arrows">
            <i class="tri-d"></i>
            <span class="pair"><i class="tri-u"></i><i class="tri-u"></i></span>
            <i class="square"></i>
            <span class="pair"><i class="tri-d"></i><i class="tri-d"></i></span>
          </div>
        </div>
      </div>
    `;
  }

  private status() {
    return html`
      <div class="status">
        ${spread(27, [
          [41, html`<span>页面: 1/40</span>`],
          [148, html`<span>字数: 11261</span>`],
          [269, icons.docCheck],
          [297, html`<span>拼写检查</span>`],
          [397, icons.docX],
          [425, html`<span>文档校对</span>`],
          [525, html`<span>兼容模式</span>`],
          [1272, html`<span class="on2">${icons.vDoc}</span>`],
          [1317, icons.vOutline],
          [1355, icons.vBook],
          [1395, icons.vWeb],
          [1434, icons.vPen],
          [1492, icons.focus],
          [1527, html`<span>100%</span>`],
          [1582, caret],
          [1607, ic(17, 4, svg`<path d="M0 2H17" stroke-width="3.5" />`)],
          [1640, html`<span class="slider"><b></b><u></u><s></s></span>`],
          [1865, ic(16, 16, svg`<path d="M8 0V16M0 8H16" stroke-width="3" />`)],
          [1899, icons.full],
        ])}
      </div>
    `;
  }

  private taskbar() {
    return html`
      <div class="taskbar">
        <div class="current"></div>
        <div class="running" style="left:312px;width:61px"></div>
        <div class="running" style="left:381px;width:73px"></div>
        <div class="running" style="left:462px;width:61px"></div>
        <div class="red-peek"></div>
        ${spread(27, [...apps, ...tray])}
        <div class="red-dot"></div>
        <div class="mark-text">CSDN @qq_295391197</div>
      </div>
    `;
  }

  private dialog() {
    const rows = [
      ["页数", "40"],
      ["字数", "11261"],
      ["字符数(不计空格)", "15296"],
      ["字符数(计空格)", "15775"],
      ["段落数", "761"],
      ["非中文单词", "845"],
      ["中文字符", "10416"],
    ];
    return html`
      <div class="dialog">
        <div class="dlg-title">
          ${ic(21, 21, svg`<rect width="21" height="21" rx="2" fill="#3f8ee8" stroke="none" /><path d="M5 6L7 15L10.5 9L14 15L16 6" stroke="#fff" />`)}
          <span>字数统计</span>
          ${ic(15, 15, svg`<path d="M1 1L14 14M14 1L1 14" />`, "#333")}
        </div>
        <div class="legend">统计信息</div>
        <div class="stats">
          ${rows.map(([k, v]) => html`<span>${k}</span><span>${v}</span>`)}
        </div>
        <div class="incl"><span class="box"></span>包括文本框、脚注和尾注(F)</div>
        <div class="dlg-foot">
          <span class="link">${icons.play}操作技巧</span>
          <div class="close">
            关闭
            <span class="pointer">${ic(13, 18, svg`<path d="M1 1V15L4 12L7 17L10 16L7 11H12Z" fill="#fff" stroke="#222" stroke-width="1.2" />`)}</span>
          </div>
        </div>
      </div>
    `;
  }

  private pill() {
    const pink = "#f45f96";
    return html`
      <div class="pill">
        ${spread(715, [
          [
            783,
            ic(79, 102, svg`
              <path d="M18 36H8C3 36 0 40 0 46V92C0 98 3 102 9 102H18Z" fill=${pink} stroke="none" />
              <path d="M23 36H26C32 30 33 20 35 10C36 3 40 0 43 0C49 0 52 8 52 18V36H74C78 36 79 40 79 44C78 60 76 72 71 82C67 94 64 102 54 102H23Z" fill=${pink} stroke="none" />
            `),
          ],
          [
            941,
            ic(85, 110, svg`
              <ellipse cx="42.5" cy="55" rx="42.5" ry="55" fill=${pink} stroke="none" />
              <path d="M27 27.5H57M42.5 30V83M24 69V58C24 47 32 39 42.5 39C53 39 61 47 61 58V69" stroke="#ffdce8" stroke-width="4" />
            `),
          ],
          [
            1106,
            html`<span class="star"
              >${ic(78, 102, svg`<path d="M39 6L50 33L72 38L60 60L60 96L39 86L19 96L18 60L6 38L28 33Z" fill="#fff" stroke="#fff" stroke-width="11" stroke-linejoin="round" />`)}</span
            >`,
          ],
        ])}
      </div>
    `;
  }
}
